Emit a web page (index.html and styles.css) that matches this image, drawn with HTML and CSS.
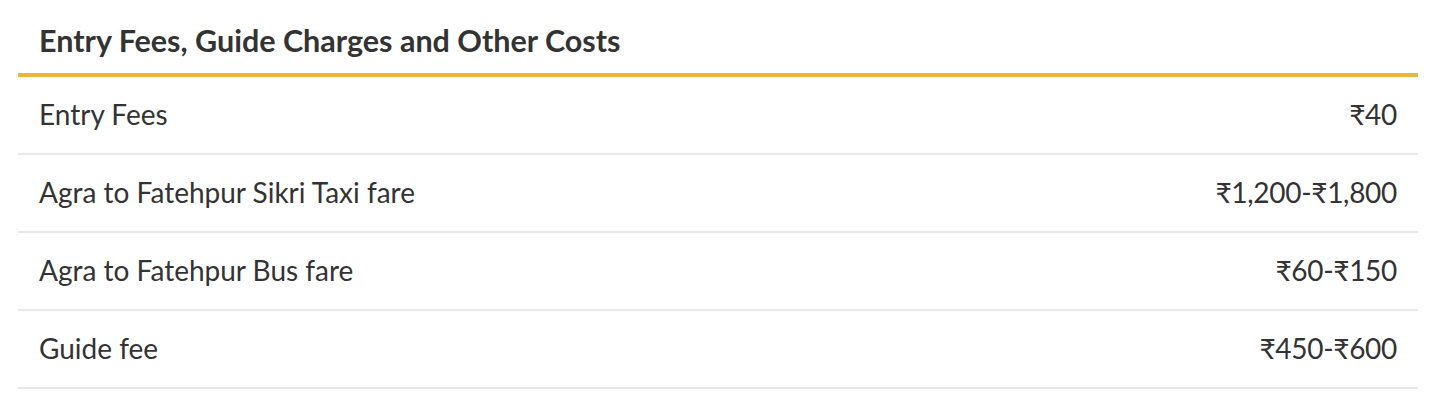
FILE: index.html
```html
<!DOCTYPE html>
<html>
<head>
<meta charset="utf-8">
<link rel="stylesheet" href="styles.css">
</head>
<body>
<section class="costs">
  <h2 class="costs-title">Entry Fees, Guide Charges and Other Costs</h2>
  <div class="costs-list">
    <div class="row"><span class="label">Entry Fees</span><span class="value">₹40</span></div>
    <div class="row"><span class="label">Agra to Fatehpur Sikri Taxi fare</span><span class="value">₹1,200-₹1,800</span></div>
    <div class="row"><span class="label">Agra to Fatehpur Bus fare</span><span class="value">₹60-₹150</span></div>
    <div class="row"><span class="label">Guide fee</span><span class="value">₹450-₹600</span></div>
  </div>
</section>
</body>
</html>
```
FILE: styles.css
```css
html, body {
  margin: 0;
  padding: 0;
  background: #ffffff;
}
body {
  font-family: Lato, "Noto Sans", "DejaVu Sans", sans-serif;
  color: #333333;
}
.costs {
  margin: 0 14px 0 18px;
}
.costs-title {
  margin: 0;
  height: 77px;
  box-sizing: border-box;
  padding: 22px 21px 0;
  font-size: 30.5px;
  font-weight: 700;
  line-height: 36px;
  color: #333333;
  border-bottom: 4px solid #f0b43c;
}
.row {
  display: flex;
  justify-content: space-between;
  align-items: center;
  height: 78px;
  box-sizing: border-box;
  padding: 0 21px 3px;
  border-bottom: 2px solid #e6e6e6;
  font-size: 28px;
}
.value {
  letter-spacing: -0.3px;
}
```
